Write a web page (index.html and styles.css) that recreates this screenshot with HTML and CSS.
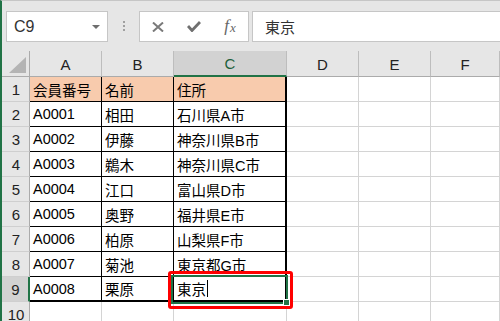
FILE: index.html
```html
<!DOCTYPE html>
<html lang="ja">
<head>
    <meta charset="UTF-8">
    <meta name="viewport" content="width=device-width, initial-scale=1.0">
    <title>Excel 会員リスト</title>
    <link rel="stylesheet" href="styles.css">
</head>
<body>
    <div class="app">
        <div class="toolbar">
            <div class="name-box">
                <span>C9</span>
                <span class="drop"></span>
            </div>
            <div class="dots"><i></i><i></i><i></i></div>
            <div class="fx-buttons">
                <span class="fx-btn">
                    <svg width="12" height="10" viewBox="0 0 12 10"><path d="M1 0.5 L11 9.5 M11 0.5 L1 9.5" stroke="#7a7a7a" stroke-width="2" fill="none"/></svg>
                </span>
                <span class="fx-btn">
                    <svg width="14" height="11" viewBox="0 0 14 11"><path d="M1 5 L5 9.5 L13 1" stroke="#707070" stroke-width="2.8" fill="none"/></svg>
                </span>
                <span class="fx-btn fx"><em>f</em><em class="sub">x</em></span>
            </div>
            <div class="formula">東京</div>
        </div>

        <div class="sheet">
            <div class="grid">
                <!-- column headers -->
                <div class="corner"><span class="tri"></span></div>
                <div class="col-head">A</div>
                <div class="col-head">B</div>
                <div class="col-head sel">C</div>
                <div class="col-head">D</div>
                <div class="col-head">E</div>
                <div class="col-head">F</div>

                <div class="row-head">1</div>
                <div class="cell tb hd">会員番号</div>
                <div class="cell tb hd">名前</div>
                <div class="cell tb hd end">住所</div>
                <div class="cell"></div><div class="cell"></div><div class="cell"></div>

                <div class="row-head">2</div>
                <div class="cell tb">A0001</div>
                <div class="cell tb">相田</div>
                <div class="cell tb end">石川県A市</div>
                <div class="cell"></div><div class="cell"></div><div class="cell"></div>

                <div class="row-head">3</div>
                <div class="cell tb">A0002</div>
                <div class="cell tb">伊藤</div>
                <div class="cell tb end">神奈川県B市</div>
                <div class="cell"></div><div class="cell"></div><div class="cell"></div>

                <div class="row-head">4</div>
                <div class="cell tb">A0003</div>
                <div class="cell tb">鵜木</div>
                <div class="cell tb end">神奈川県C市</div>
                <div class="cell"></div><div class="cell"></div><div class="cell"></div>

                <div class="row-head">5</div>
                <div class="cell tb">A0004</div>
                <div class="cell tb">江口</div>
                <div class="cell tb end">富山県D市</div>
                <div class="cell"></div><div class="cell"></div><div class="cell"></div>

                <div class="row-head">6</div>
                <div class="cell tb">A0005</div>
                <div class="cell tb">奥野</div>
                <div class="cell tb end">福井県E市</div>
                <div class="cell"></div><div class="cell"></div><div class="cell"></div>

                <div class="row-head">7</div>
                <div class="cell tb">A0006</div>
                <div class="cell tb">柏原</div>
                <div class="cell tb end">山梨県F市</div>
                <div class="cell"></div><div class="cell"></div><div class="cell"></div>

                <div class="row-head">8</div>
                <div class="cell tb">A0007</div>
                <div class="cell tb">菊池</div>
                <div class="cell tb end">東京都G市</div>
                <div class="cell"></div><div class="cell"></div><div class="cell"></div>

                <div class="row-head sel">9</div>
                <div class="cell tb last">A0008</div>
                <div class="cell tb last">栗原</div>
                <div class="cell tb last end"><span>東京</span><span class="caret"></span></div>
                <div class="cell"></div><div class="cell"></div><div class="cell"></div>

                <div class="row-head">10</div>
                <div class="cell"></div><div class="cell"></div><div class="cell"></div>
                <div class="cell"></div><div class="cell"></div><div class="cell"></div>
            </div>

            <!-- active cell frame and the red marker drawn over it -->
            <div class="active-cell"><span class="handle"></span></div>
            <div class="marker"></div>
        </div>
    </div>
</body>
</html>
```

FILE: styles.css
```css
html, body {
    margin: 0;
    padding: 0;
    overflow: hidden;
}
body {
    width: 500px;
    height: 321px;
    font-family: "Liberation Sans", "Noto Sans CJK JP", sans-serif;
    background-color: #fff;
}
.app {
    height: 320px;
    border-top: 1px solid #c6c6c6;
    border-left: 2px solid #217346;
}

/* formula bar */
.toolbar {
    height: 50px;
    display: flex;
    align-items: flex-start;
    padding: 10px 0 0 4px;
    box-sizing: border-box;
    background-color: #e6e6e6;
}
.name-box {
    width: 102px;
    height: 31px;
    box-sizing: border-box;
    border: 1px solid #c6c6c6;
    background-color: #fff;
    display: flex;
    align-items: center;
    justify-content: space-between;
    padding: 0 7px 0 7px;
    font-size: 16px;
    color: #333;
}
.drop {
    width: 0;
    height: 0;
    border-left: 4px solid transparent;
    border-right: 4px solid transparent;
    border-top: 4px solid #6e6e6e;
}
.dots {
    width: 2px;
    margin: 10px 14px 0 15px;
    display: flex;
    flex-direction: column;
    gap: 2px;
}
.dots i {
    width: 2px;
    height: 2px;
    background-color: #a0a0a0;
}
.fx-buttons {
    width: 110px;
    height: 31px;
    box-sizing: border-box;
    border: 1px solid #c6c6c6;
    background-color: #fff;
    display: flex;
}
.fx-btn {
    width: 36px;
    display: flex;
    align-items: center;
    justify-content: center;
}
.fx {
    font-family: "Liberation Serif", serif;
    font-size: 17px;
    color: #666;
    padding-bottom: 2px;
    box-sizing: border-box;
}
.fx .sub {
    font-size: 13px;
    margin-top: 4px;
    margin-left: 1px;
}
.formula {
    flex: 1;
    height: 31px;
    margin-left: 3px;
    margin-right: -2px;
    box-sizing: border-box;
    border: 1px solid #c6c6c6;
    background-color: #fff;
    padding-left: 12px;
    display: flex;
    align-items: center;
    font-size: 15px;
    color: #333;
}

/* sheet */
.sheet {
    position: relative;
}
.grid {
    display: grid;
    grid-template-columns: 28px 72px 72px 113px 72px 72px 1fr;
    grid-template-rows: 26px repeat(10, 25px);
    font-size: 14.5px;
    color: #000;
}
.corner, .col-head, .row-head {
    background-color: #e6e6e6;
    box-sizing: border-box;
}
.corner {
    border-right: 1px solid #ababab;
    border-bottom: 1px solid #ababab;
    position: relative;
}
.tri {
    position: absolute;
    left: 7px;
    top: 6px;
    width: 0;
    height: 0;
    border-left: 17px solid transparent;
    border-bottom: 16px solid #b4b4b4;
}
.col-head {
    border-right: 1px solid #bdbdbd;
    border-bottom: 1px solid #ababab;
    display: flex;
    align-items: center;
    justify-content: center;
    font-size: 15px;
    color: #222;
    padding-top: 1px;
}
.col-head.sel {
    background-color: #d2d2d2;
    border-bottom: 2px solid #217346;
    color: #1d5f3c;
}
.row-head {
    border-right: 1px solid #ababab;
    border-bottom: 1px solid #cfcfcf;
    display: flex;
    align-items: center;
    justify-content: center;
    font-size: 15px;
    color: #222;
    padding-left: 1px;
}
.row-head.sel {
    background-color: #d2d2d2;
    border-right: 2px solid #217346;
}
.cell {
    border-right: 1px solid #d4d4d4;
    border-bottom: 1px solid #d4d4d4;
    box-sizing: border-box;
    display: flex;
    align-items: center;
    padding: 0 3px;
    white-space: nowrap;
    overflow: hidden;
}
.cell.tb {
    border-color: #000;
}
.cell.hd {
    background-color: #f8cbad;
}
.cell.end {
    border-right-width: 2px;
}
.cell.last {
    border-bottom-width: 2px;
}
.caret {
    width: 1px;
    height: 17px;
    margin: 0 0 1px 1px;
    background-color: #000;
}

.active-cell {
    position: absolute;
    left: 169px;
    top: 224px;
    width: 117px;
    height: 29px;
    box-sizing: border-box;
    border: 2px solid #217346;
}
.handle {
    position: absolute;
    right: -4px;
    bottom: -4px;
    width: 5px;
    height: 5px;
    background-color: #217346;
    border: 1px solid #fff;
}
.marker {
    position: absolute;
    left: 166px;
    top: 220px;
    width: 125px;
    height: 38px;
    box-sizing: border-box;
    border: 3px solid #ff0000;
    border-radius: 3px;
}
```
